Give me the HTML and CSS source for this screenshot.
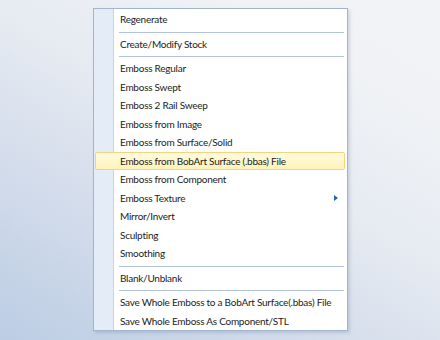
FILE: index.html
```html
<!DOCTYPE html>
<html>
<head>
  <title>Emboss Menu</title>
  <link rel="stylesheet" href="styles.css">
</head>
<body>
  <div class="menu">
    <div class="item">Regenerate</div>
    <div class="sep"></div>
    <div class="item">Create/Modify Stock</div>
    <div class="sep"></div>
    <div class="item">Emboss Regular</div>
    <div class="item">Emboss Swept</div>
    <div class="item">Emboss 2 Rail Sweep</div>
    <div class="item">Emboss from Image</div>
    <div class="item">Emboss from Surface/Solid</div>
    <div class="item hot">Emboss from BobArt Surface (.bbas) File</div>
    <div class="item">Emboss from Component</div>
    <div class="item">Emboss Texture <span class="arrow"></span></div>
    <div class="item">Mirror/Invert</div>
    <div class="item">Sculpting</div>
    <div class="item">Smoothing</div>
    <div class="sep"></div>
    <div class="item">Blank/Unblank</div>
    <div class="sep"></div>
    <div class="item">Save Whole Emboss to a BobArt Surface(.bbas) File</div>
    <div class="item">Save Whole Emboss As Component/STL</div>
  </div>
</body>
</html>
```

FILE: styles.css
```css
html, body { height: 100%; }
body { margin: 0; padding: 8px 0 0 93px; box-sizing: border-box; font-family: Lato, "Open Sans", sans-serif; font-size: 10px; letter-spacing: -0.25px; color: #1c1c1c; background: linear-gradient(30deg, #bccde4 0%, #d3dceb 30%, #e6ebf2 55%, #f0f2f5 80%, #f2f3f6 100%); }
.menu { width: 253px; border: 1px solid #a2b5cf; padding: 1px 0 0; background: linear-gradient(90deg, #e4ecf7 0, #e4ecf7 19px, #c4d3e7 19px, #c4d3e7 20px, #fff 20px); box-shadow: 2px 2px 3px rgba(60, 80, 110, 0.18); }
.item { height: 18.5px; line-height: 18.5px; margin: 0 2px 0 1px; padding-left: 24px; display: flex; align-items: center; white-space: nowrap; box-sizing: border-box; border: 1px solid transparent; }
.item.hot { border-color: #f1d57e; border-radius: 2px; background: linear-gradient(#fffbe0, #fff3b8); }
.sep { height: 1px; margin: 3px 3px 2px 25px; background: #b2c4dc; }
.arrow { margin-left: auto; margin-right: 6px; width: 0; height: 0; border-top: 3.5px solid transparent; border-bottom: 3.5px solid transparent; border-left: 4px solid #2763b3; }
```
